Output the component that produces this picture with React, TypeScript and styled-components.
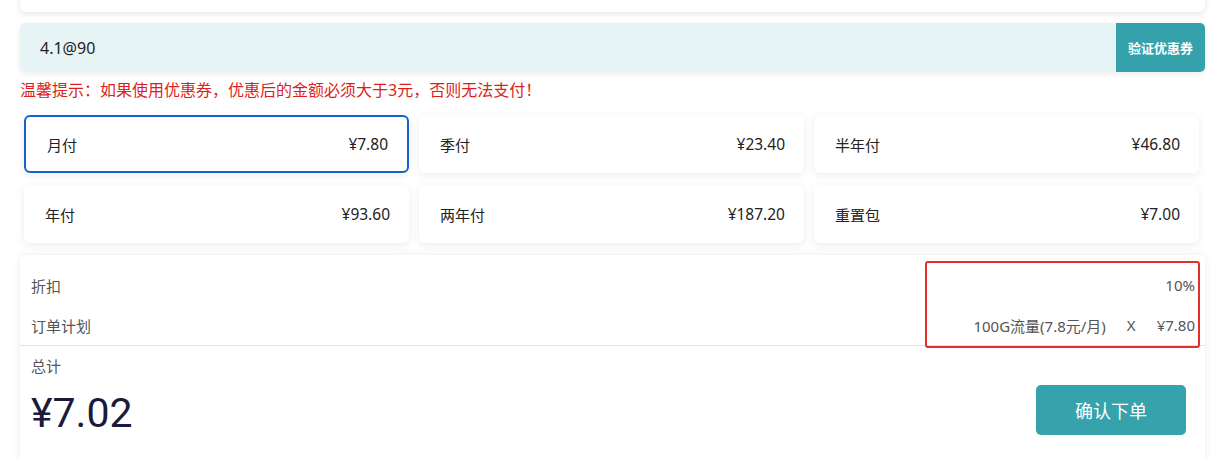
import React, { useState } from "react";
import styled, { createGlobalStyle } from "styled-components";

const GlobalStyle = createGlobalStyle`
  body {
    margin: 0;
    background: #fff;
    font-family: "Noto Sans", "Noto Sans CJK SC", sans-serif;
    color: #222;
  }
`;

const Page = styled.div`
  width: 1222px;
  height: 458px;
  overflow: hidden;
  padding: 0 17px 0 20px;
  box-sizing: border-box;
`;

const TopCard = styled.div`
  height: 40px;
  margin-top: -28px;
  background: #fff;
  border-radius: 6px;
  box-shadow: 0 2px 6px rgba(0, 0, 0, 0.1);
`;

const CouponRow = styled.div`
  display: flex;
  height: 49px;
  margin-top: 11px;
  border-radius: 5px;
  overflow: hidden;
  box-shadow: 0 2px 6px rgba(0, 0, 0, 0.08);
`;

const CouponInput = styled.input`
  flex: 1;
  border: none;
  outline: none;
  background: #e6f4f5;
  padding: 0 20px;
  font-family: inherit;
  font-size: 16px;
  color: #222;
`;

const CouponButton = styled.button`
  width: 89px;
  border: none;
  background: #35a1ab;
  color: #fff;
  font-family: inherit;
  font-size: 13px;
  font-weight: 700;
  cursor: pointer;
`;

const Warning = styled.div`
  margin-top: 7px;
  height: 22px;
  line-height: 22px;
  font-size: 16px;
  color: #dc1f1c;
`;

const PlanGrid = styled.div`
  display: grid;
  grid-template-columns: repeat(3, 385px);
  column-gap: 10px;
  row-gap: 12px;
  margin: 14px 0 0 4px;
`;

const PlanCard = styled.div<{ $active?: boolean }>`
  height: 58px;
  box-sizing: border-box;
  display: flex;
  align-items: center;
  justify-content: space-between;
  padding: 0 19px 0 21px;
  background: #fff;
  border-radius: 6px;
  font-size: 15px;
  color: #222;
  cursor: pointer;
  border: ${(p) => (p.$active ? "2px solid #1461d0" : "none")};
  box-shadow: 0 2px 8px rgba(0, 0, 0, 0.08);
`;

const Price = styled.span`
  font-size: 15.5px;
`;

const SummaryCard = styled.div`
  position: relative;
  margin-top: 12px;
  background: #fff;
  border-radius: 6px 6px 0 0;
  box-shadow: 0 0 8px rgba(0, 0, 0, 0.08);
  height: 220px;
`;

const DetailList = styled.div`
  padding-top: 10px;
  border-bottom: 1px solid #e2e2e2;
`;

const DetailRow = styled.div`
  height: 40px;
  display: flex;
  align-items: center;
  justify-content: space-between;
  padding: 0 10px 0 11px;
  font-size: 15px;
  color: #555;
`;

const PlanInfo = styled.span`
  display: flex;
  gap: 21px;
`;

const Highlight = styled.div`
  position: absolute;
  left: 905px;
  top: 6px;
  width: 275px;
  height: 87px;
  box-sizing: border-box;
  border: 2.5px solid #e5302a;
  border-radius: 3px;
  pointer-events: none;
`;

const TotalSection = styled.div`
  display: flex;
  justify-content: space-between;
  align-items: flex-end;
  padding: 9px 19px 0 11px;
`;

const TotalLabel = styled.div`
  font-size: 15px;
  color: #555;
  line-height: 22px;
`;

const TotalAmount = styled.div`
  font-family: Roboto, "Noto Sans", sans-serif;
  font-size: 41px;
  color: #1b1a3a;
  line-height: 60px;
  margin-top: 6px;
`;

const OrderButton = styled.button`
  width: 150px;
  height: 50px;
  margin-bottom: 8px;
  border: none;
  border-radius: 5px;
  background: #36a2ac;
  color: #fff;
  font-family: inherit;
  font-size: 18px;
  cursor: pointer;
`;

const plans = [
  { name: "月付", price: "¥7.80" },
  { name: "季付", price: "¥23.40" },
  { name: "半年付", price: "¥46.80" },
  { name: "年付", price: "¥93.60" },
  { name: "两年付", price: "¥187.20" },
  { name: "重置包", price: "¥7.00" },
];

const App: React.FC = () => {
  const [active, setActive] = useState<number>(0);
  const [coupon, setCoupon] = useState<string>("4.1@90");
  return (
    <Page>
      <GlobalStyle />
      <TopCard />
      <CouponRow>
        <CouponInput value={coupon} onChange={(e) => setCoupon(e.target.value)} />
        <CouponButton>验证优惠券</CouponButton>
      </CouponRow>
      <Warning>温馨提示：如果使用优惠券，优惠后的金额必须大于3元，否则无法支付！</Warning>
      <PlanGrid>
        {plans.map((p, i) => (
          <PlanCard key={p.name} $active={i === active} onClick={() => setActive(i)}>
            <span>{p.name}</span>
            <Price>{p.price}</Price>
          </PlanCard>
        ))}
      </PlanGrid>
      <SummaryCard>
        <DetailList>
          <DetailRow>
            <span>折扣</span>
            <span>10%</span>
          </DetailRow>
          <DetailRow>
            <span>订单计划</span>
            <PlanInfo>
              <span>100G流量(7.8元/月)</span>
              <span>X</span>
              <span>¥7.80</span>
            </PlanInfo>
          </DetailRow>
        </DetailList>
        <TotalSection>
          <div>
            <TotalLabel>总计</TotalLabel>
            <TotalAmount>¥7.02</TotalAmount>
          </div>
          <OrderButton>确认下单</OrderButton>
        </TotalSection>
        <Highlight />
      </SummaryCard>
    </Page>
  );
};

export default App;
